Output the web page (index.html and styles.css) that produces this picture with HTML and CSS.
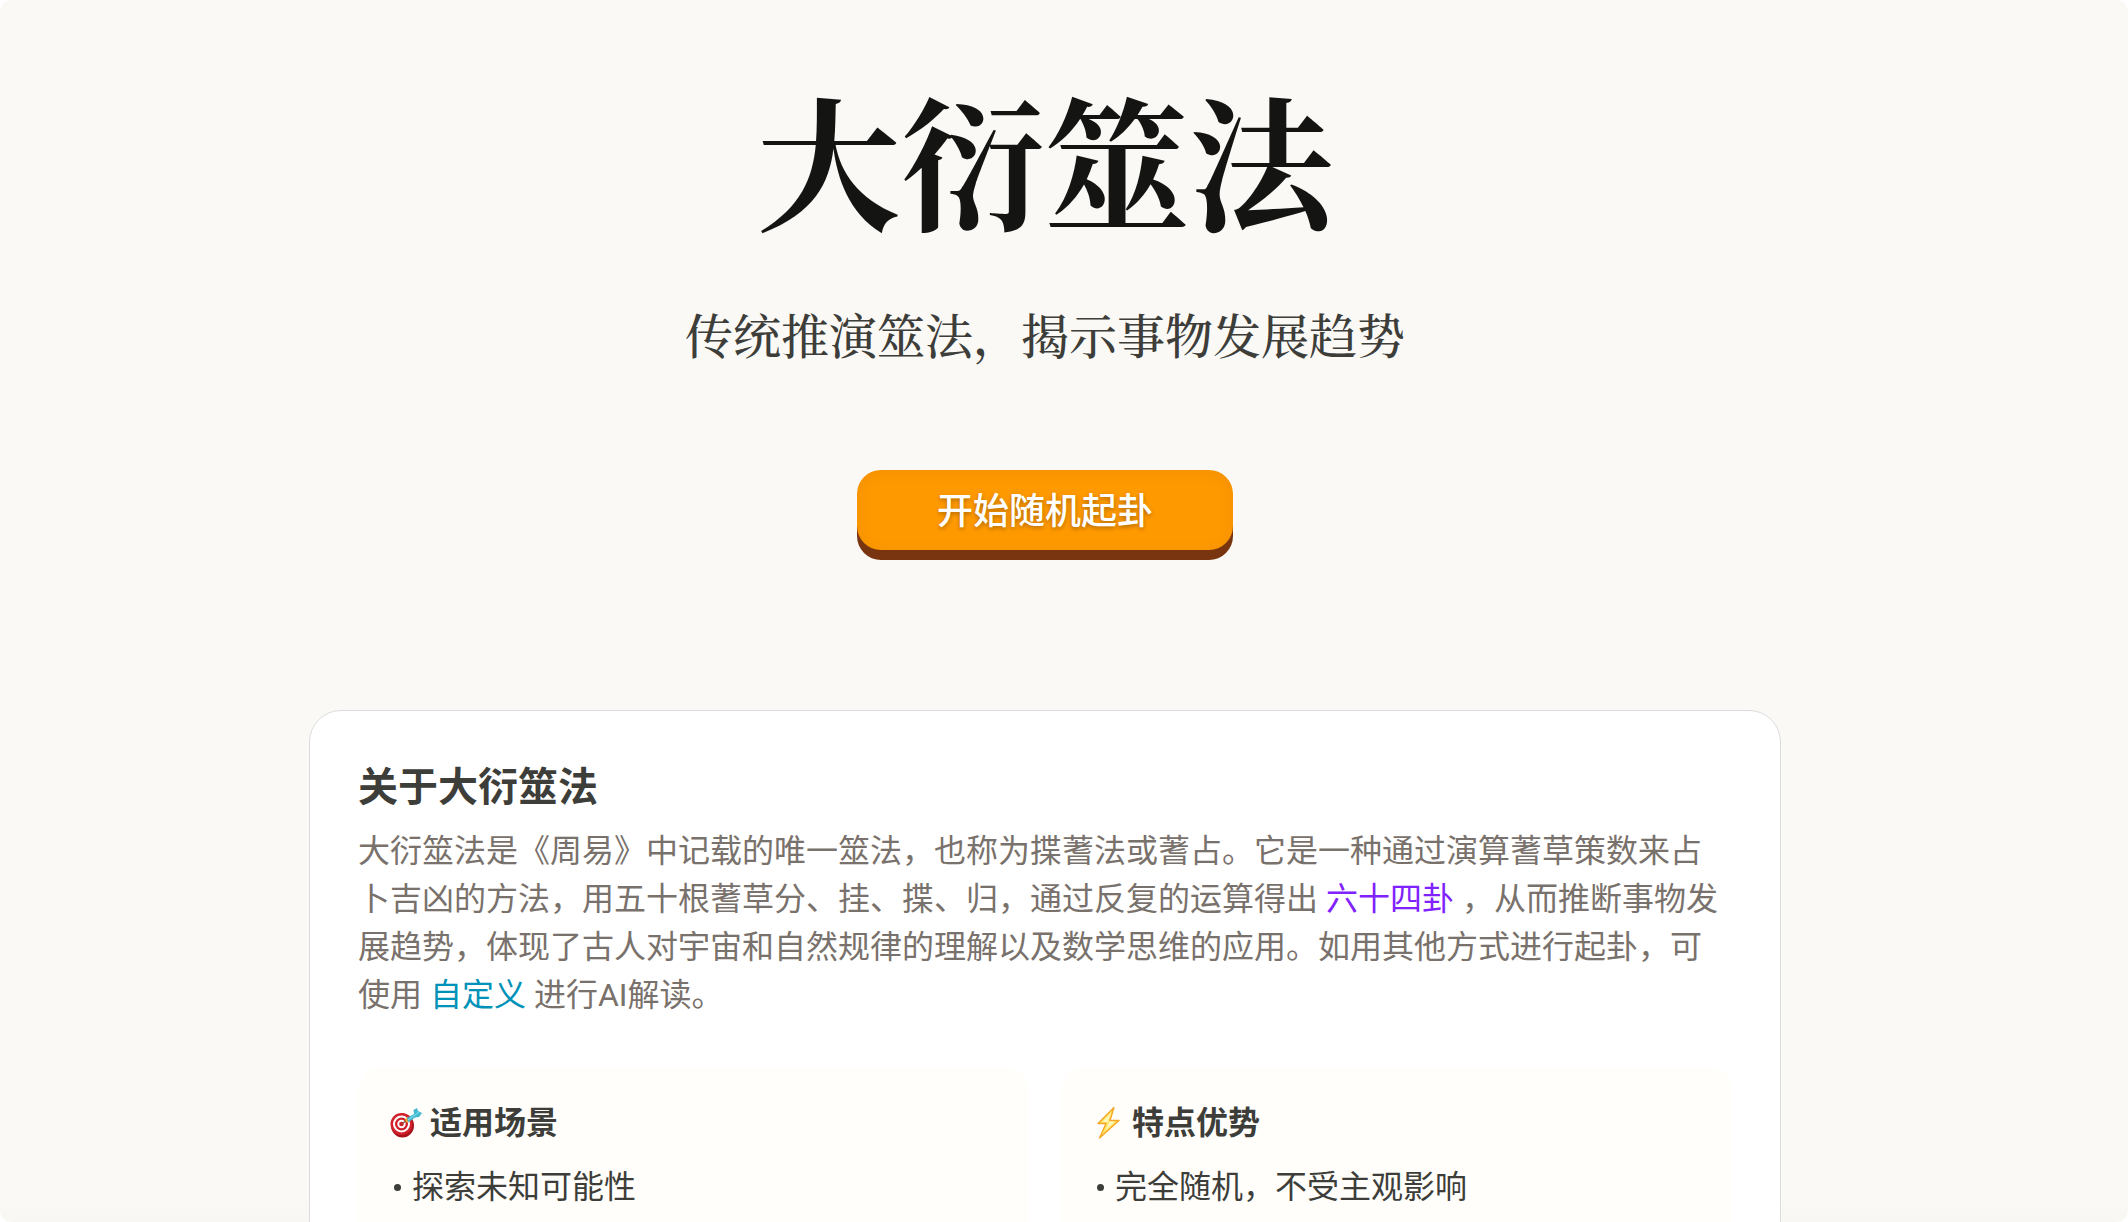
FILE: index.html
```
<!DOCTYPE html>
<html lang="zh-CN">
<head>
    <meta charset="UTF-8">
    <meta name="viewport" content="width=device-width, initial-scale=1.0">
    <title>大衍筮法</title>
    <link rel="stylesheet" href="styles.css">
</head>
<body>
    <div class="page">
        <header class="hero">
            <h1>大衍筮法</h1>
            <p class="subtitle">传统推演筮法，揭示事物发展趋势</p>
            <button type="button" class="start">开始随机起卦</button>
        </header>
        <main class="card">
            <h2>关于大衍筮法</h2>
            <p class="intro">大衍筮法是《周易》中记载的唯一筮法，也称为揲蓍法或蓍占。它是一种通过演算蓍草策数来占卜吉凶的方法，用五十根蓍草分、挂、揲、归，通过反复的运算得出 <a href="#gua" class="purple">六十四卦</a> ，从而推断事物发展趋势，体现了古人对宇宙和自然规律的理解以及数学思维的应用。如用其他方式进行起卦，可使用 <a href="#custom" class="cyan">自定义</a> 进行AI解读。</p>
            <div class="boxes">
                <section class="box">
                    <h3>
                        <svg width="32" height="32" viewBox="0 0 32 32" aria-hidden="true">
                            <ellipse cx="12.500" cy="18.500" rx="11.500" ry="12" fill="#a5121a"/>
                            <ellipse cx="11.500" cy="17" rx="11" ry="11" fill="#d3202a"/>
                            <ellipse cx="11.500" cy="17" rx="8.500" ry="8.500" fill="#fff"/>
                            <ellipse cx="11.500" cy="17" rx="6.500" ry="6.500" fill="#cf2029"/>
                            <ellipse cx="11.500" cy="17" rx="4.200" ry="4.200" fill="#fff"/>
                            <ellipse cx="11.500" cy="17" rx="2.300" ry="2.300" fill="#cf2029"/>
                            <path d="M12 17l5-4" stroke="#8a5a3c" stroke-width="1.500"/>
                            <path d="M15 13l2-3 3 4-3 2z" fill="#f0a92c"/>
                            <path d="M17 11l7-4-.5-4L27 1l1 3 4 2-3 4-4 .5-7 5z" fill="#43b9cf"/>
                            <path d="M18 13L29 5" stroke="#8be3ee" stroke-width="1"/>
                        </svg>
                        <span>适用场景</span>
                    </h3>
                    <ul>
                        <li>探索未知可能性</li>
                    </ul>
                </section>
                <section class="box">
                    <h3>
                        <svg width="31" height="32" viewBox="0 0 31 32" aria-hidden="true">
                            <path d="M21 .5L5 16.500h8L6.500 31 26 13.500H17z" fill="#ffe566" stroke="#f5a623" stroke-width="1.300" stroke-linejoin="round"/>
                            <path d="M18 6L9.500 15h7l-4 8.500L21.500 14.500h-7z" fill="#fff8c4"/>
                        </svg>
                        <span>特点优势</span>
                    </h3>
                    <ul>
                        <li>完全随机，不受主观影响</li>
                    </ul>
                </section>
            </div>
        </main>
    </div>
</body>
</html>
```

FILE: styles.css
```
* {
    box-sizing: border-box;
}
html {
    background: #fff;
}
body {
    margin: 0;
    font-family: Roboto, "Noto Sans CJK SC", sans-serif;
    color: #3d3d3a;
}
h1, h2, h3, p, ul {
    margin: 0;
    padding: 0;
}
.page {
    height: 100vh;
    overflow: hidden;
    padding: 70px 38px 0 0;
    background: linear-gradient(#faf9f5 98%, #f8f7f3);
    border-radius: 12px;
}
.hero {
    display: flex;
    flex-direction: column;
    align-items: center;
}
h1, .subtitle {
    font-family: "Noto Serif CJK SC", "Source Han Serif SC", "Songti SC", "Noto Sans CJK SC", serif;
}
h1 {
    font-size: 144px;
    line-height: 176px;
    font-weight: 700;
    color: #141413;
}
.subtitle {
    margin-top: 56px;
    font-size: 48px;
    line-height: 64px;
    font-weight: 500;
}
.start {
    margin-top: 104px;
    padding: 0 80px 4px;
    height: 80px;
    border: none;
    border-radius: 24px;
    background: #ff9900;
    box-shadow: 0 10px 0 #78350f, inset 0 2px 16px rgba(0, 0, 0, 0.06);
    color: #fff;
    font-family: inherit;
    font-size: 36px;
    font-weight: 500;
    text-shadow: 0 2px 4px rgba(0, 0, 0, 0.3);
    cursor: pointer;
}
.card {
    max-width: 1472px;
    margin: 160px auto 0;
    padding: 48px;
    background: #fff;
    border: 1px solid #dcdcdf;
    border-radius: 32px;
}
h2 {
    font-size: 40px;
    line-height: 58px;
    font-weight: 600;
}
.intro {
    margin-top: 10px;
    font-size: 32px;
    line-height: 48px;
    color: #79716b;
}
a {
    text-decoration: none;
}
.purple {
    color: #7f22fe;
}
.cyan {
    color: #0092b8;
}
.boxes {
    display: grid;
    grid-template-columns: 1fr 1fr;
    gap: 32px;
    margin-top: 48px;
}
.box {
    min-height: 240px;
    padding: 32px;
    background: #fffefa;
    border-radius: 24px;
}
h3 {
    display: flex;
    align-items: center;
    gap: 8px;
    font-size: 32px;
    line-height: 48px;
    font-weight: 600;
}
ul {
    margin-top: 16px;
    list-style: none;
    font-size: 32px;
    line-height: 48px;
}
li {
    display: flex;
    align-items: center;
    gap: 8px;
}
li::before {
    content: "";
    width: 7px;
    height: 7px;
    margin: 0 3px 0 4px;
    border-radius: 50%;
    background: #3d3d3a;
}
```
